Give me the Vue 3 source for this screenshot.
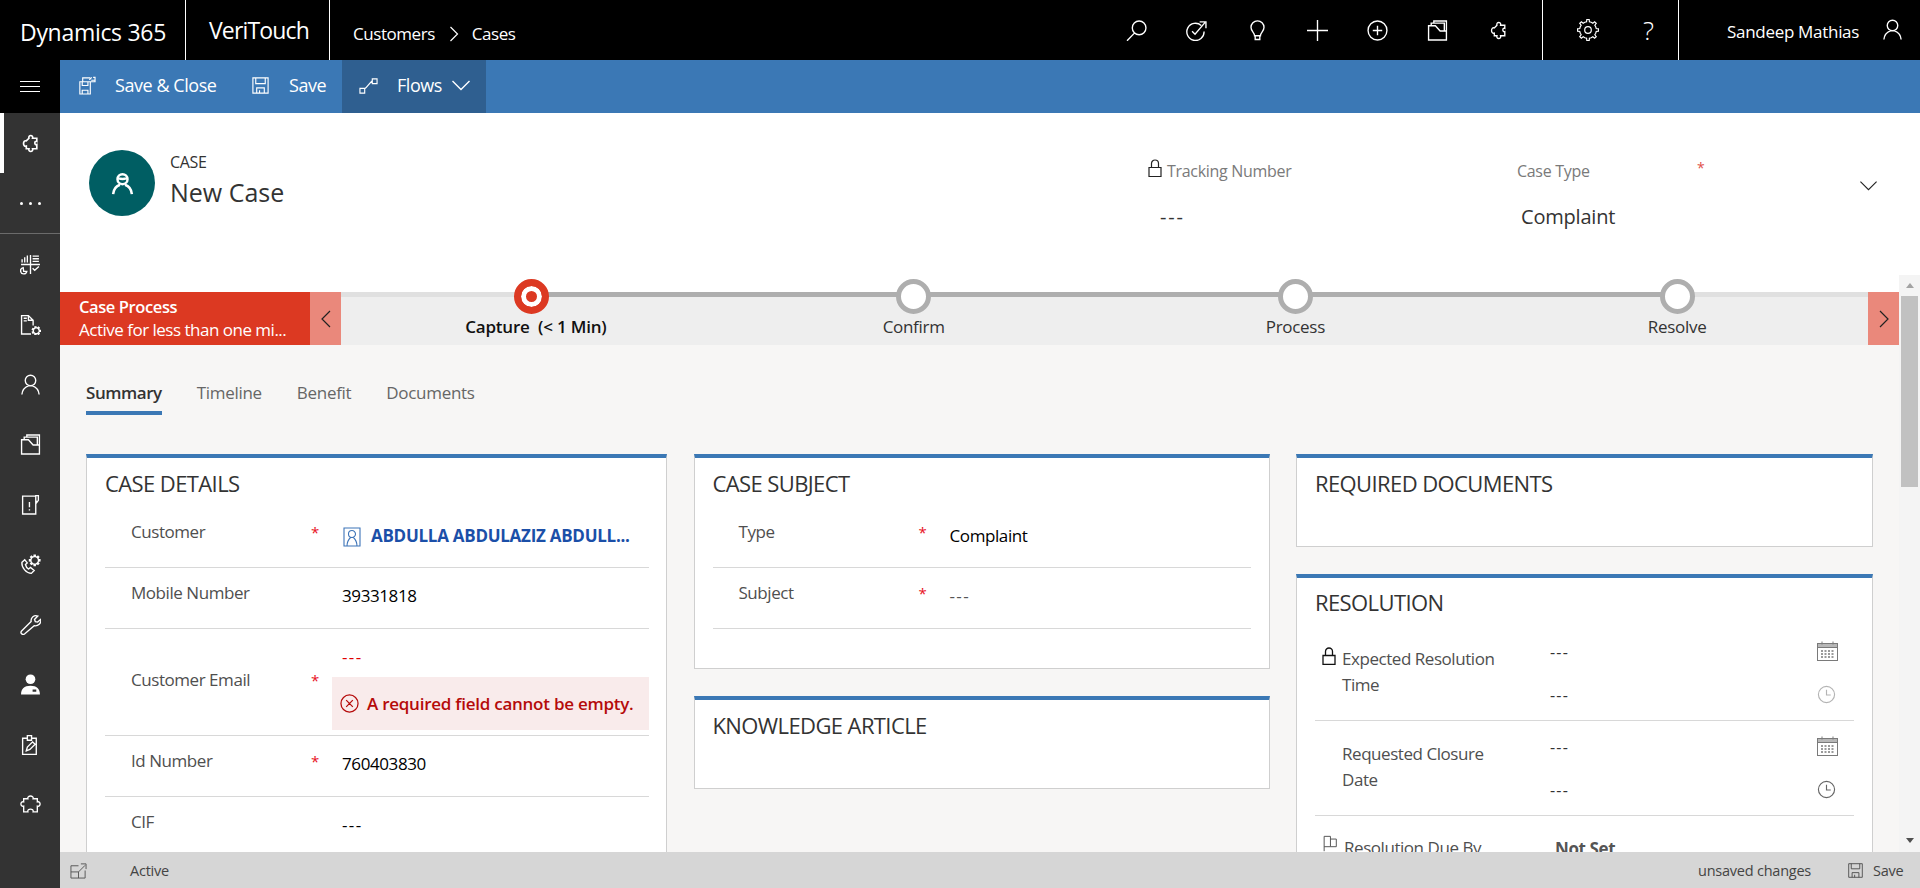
<script setup>
const gear = (cx, cy, r1, r2, n) => {
  let d = ''
  const step = (Math.PI * 2) / n
  for (let i = 0; i < n; i++) {
    const a = i * step
    const pts = [
      [r1, a - step * 0.5],
      [r1, a - step * 0.22],
      [r2, a - step * 0.14],
      [r2, a + step * 0.14],
      [r1, a + step * 0.22]
    ]
    pts.forEach(([r, t], j) => {
      const x = (cx + r * Math.cos(t)).toFixed(2)
      const y = (cy + r * Math.sin(t)).toFixed(2)
      d += (i === 0 && j === 0 ? 'M' : 'L') + x + ' ' + y + ' '
    })
  }
  return d + 'Z'
}

const icons = {
  search: 'M19 7.500a6.500 6.500 0 1 1-13 0a6.500 6.500 0 0 1 13 0ZM8 12.500L1 19.800',
  target: 'M14.5 5.2A8.2 8.2 0 1 0 17.2 11M5.8 10.8l2.8 2.8L18 2.5M13 1.8h6v6',
  bulb: 'M7.2 15c0-3-3.4-4-3.4-8a6.2 6.2 0 0 1 12.4 0c0 4-3.4 5-3.4 8ZM7.8 15v3.6h4.4V15',
  plus: 'M0 10h20M10 0v20',
  addCircle: 'M19 10a9 9 0 1 1-18 0a9 9 0 0 1 18 0ZM10 5.5v9M5.5 10h9',
  folder: 'M1.5 5.5V19h17V10.5h-6L8 5.5ZM4 5.5V3h12.500v7.500M6.500 3V1h12v9.500',
  puzzle: 'M8.5 5C7.5 1.5 13 1.5 12 5h4v3c-2.5-1-2.5 4 0 3v4h-4c1 3.5-4.5 3.5-3.5 0H6v-2.5c-3.5 1-3.5-6 0-5Z',
  puzzleWide: 'M7.5 4.5C6.500 1 13.500 1 12.500 4.500H16.500V7.500C20 6.500 20 12.500 16.500 11.500V17H12.500C13.500 13.500 6.500 13.500 7.500 17H3.500V11.500C0 12.500 0 6.500 3.500 7.500V4.500Z',
  gear: gear(10, 10, 7.6, 9.6, 8) + 'M13 10a3 3 0 1 1-6 0a3 3 0 0 1 6 0Z',
  person: 'M15 6.2a5 5 0 1 1-10 0a5 5 0 0 1 10 0ZM1.8 19.5c.4-4.6 3-7 6.2-8.2M18.2 19.5c-.4-4.6-3-7-6.2-8.2',
  save: 'M2 2h16v16H2ZM5 2v6h10V2M6 18v-5.5h8V18M9 18v-3',
  saveClose: 'M3 6h3v-4h8M3 6h11v13H3ZM5.5 19v-4h6v4M5.5 6v4h6V6M14 6h5V1.5h-2M13 4l2.5-2.5M15 4.5h4',
  flows: 'M1 13h5v5H1ZM14 3h5v5h-5ZM6 13.5c2.5-1.5 4-5 8-8.5',
  chevron: 'M1.500 6l8.500 8.500 8.500-8.500',
  chartGrid: 'M1 10h18M10 1v18M2 8V5M4.5 8V3M7 8V1.5M12 2h6M12 4.5h6M12 7h6M12 13.5l2 2 4-3.5M3 13a3 3 0 1 0 3.5 3.5H3.5Z',
  docGear: 'M12.5 11V6L8 1.5H1.5V19h9M8 1.5V6h4.5M3.5 4h3M3.5 6.5h3',
  alertDoc: 'M2.5 2H15v17H2.5ZM9 7.5v5M9 14.5v1.2M15 6V1.5h2.5V6L16 8Z',
  phone: 'M4.5 5.5L1.8 8c-.6 5 4.5 10.5 9 10.5l2.7-2.7-3.5-3-1.8 1.5C6.5 13.5 5.5 11.5 5.2 10l1.7-1.5Z',
  wrench: 'M1.5 16.2L10.6 7.2C10 3.5 13.5.5 17 2l-3.2 3.2.8 2 2.2.5L19.8 5c.8 3.8-2.7 7-6.3 6.2L4.3 19c-2 1.5-4.4-1-2.8-2.8Z',
  clip: 'M2.5 4H7V1.5h4V4h4.5v15.5h-13ZM7 4v2h4V4M6 16l1-3.5 5-5 2.4 2.2-5 5Z',
  lock: 'M1 8.5h12v9H1ZM3.5 8.5V4.5a3.5 3.5 0 0 1 7 0v4',
  flag: 'M1.5 18V1.5h7V13h-7M8.5 4.5H15V13H8.5'
}

const rail = [
  { key: 'chartGrid', thin: true },
  { key: 'docGear', gear: true },
  { key: 'person' },
  { key: 'folder' },
  { key: 'alertDoc' },
  { key: 'phone', gearTop: true },
  { key: 'wrench' },
  { key: 'solid' },
  { key: 'clip' },
  { key: 'puzzleWide' }
]
const topIcons = ['search', 'target', 'bulb', 'plus', 'addCircle', 'folder', 'puzzle']
const gearSmall = gear(15.5, 16, 2.8, 3.9, 7)
const gearTop = gear(14, 6, 3.6, 5, 8)

const stages = [
  { label: 'Capture  (< 1 Min)', active: true },
  { label: 'Confirm' },
  { label: 'Process' },
  { label: 'Resolve' }
]
const tabs = ['Summary', 'Timeline', 'Benefit', 'Documents']
const calCells = [0, 1, 2, 3, 4, 5, 6, 7, 8, 9, 10, 11]
const resolutionRows = [
  { label: 'Expected Resolution Time', lock: true, faded: true },
  { label: 'Requested Closure Date', lock: false, faded: false }
]
</script>

<template>
  <div class="app">
    <header class="topbar">
      <div class="brand">Dynamics 365</div>
      <div class="appname">VeriTouch</div>
      <nav class="crumbs">
        <span>Customers</span>
        <svg class="crumb-sep" viewBox="0 0 10 16"><path d="M1.5 1l7 7-7 7" /></svg>
        <span>Cases</span>
      </nav>
      <div class="top-icons">
        <svg v-for="k in topIcons" :key="k" class="ico top-ico" viewBox="0 0 20 20"><path :d="icons[k]" /></svg>
      </div>
      <div class="top-help">
        <svg class="ico top-gear" viewBox="0 0 20 20"><path :d="icons.gear" /></svg>
        <span class="question">?</span>
      </div>
      <div class="top-user">
        <span class="username">Sandeep Mathias</span>
        <svg class="ico top-person" viewBox="0 0 20 20"><path :d="icons.person" /></svg>
      </div>
    </header>

    <div class="below">
      <aside class="sidebar">
        <div class="burger"><i></i><i></i><i></i></div>
        <div class="rail-top">
          <div class="rail-item selected">
            <svg class="ico rail-ico strong" viewBox="0 0 20 20"><path :d="icons.puzzle" /></svg>
          </div>
          <div class="rail-item dots"><i></i><i></i><i></i></div>
        </div>
        <div v-for="item in rail" :key="item.key" class="rail-item">
          <svg v-if="item.key === 'solid'" class="rail-ico solid" viewBox="0 0 20 20">
            <circle cx="10" cy="5" r="4.6" />
            <path fill-rule="evenodd" d="M1 19.5c0-5 3-8.200 9-8.200s9 3.200 9 8.200ZM12 14.800h3.500v2H12Z" />
          </svg>
          <svg v-else class="ico rail-ico" viewBox="0 0 20 20">
            <path :d="icons[item.key]" />
            <path v-if="item.gear" :d="gearSmall" />
            <path v-if="item.gearTop" :d="gearTop" />
          </svg>
        </div>
      </aside>

      <main class="main">
        <div class="cmdbar">
          <button class="cmd first">
            <svg class="ico cmd-ico" viewBox="0 0 20 20"><path :d="icons.saveClose" /></svg>
            <span>Save &amp; Close</span>
          </button>
          <button class="cmd second">
            <svg class="ico cmd-ico" viewBox="0 0 20 20"><path :d="icons.save" /></svg>
            <span>Save</span>
          </button>
          <button class="cmd flows">
            <svg class="ico cmd-ico" viewBox="0 0 20 20"><path :d="icons.flows" /></svg>
            <span>Flows</span>
            <svg class="ico cmd-chev" viewBox="0 0 20 20"><path :d="icons.chevron" /></svg>
          </button>
        </div>

        <section class="form-head">
          <div class="avatar">
            <svg class="ico avatar-ico" viewBox="0 0 20 20">
              <path d="M14 6.500a4 4 0 1 1-8 0a4 4 0 0 1 8 0ZM6.500 5.500c2 1 5 1 7 0M2.500 18.500c.4-4 2.500-6.500 5.500-7.500M17.500 18.500c-.4-4-2.500-6.500-5.500-7.500" />
            </svg>
          </div>
          <div class="head-title">
            <div class="entity">CASE</div>
            <div class="record">New Case</div>
          </div>
          <div class="head-field tracking">
            <div class="hf-label">
              <svg class="ico lock-ico" viewBox="0 0 14 18"><path :d="icons.lock" /></svg>
              <span>Tracking Number</span>
            </div>
            <div class="hf-value dash">---</div>
          </div>
          <div class="head-field casetype">
            <div class="hf-label">
              <span class="ct-label">Case Type</span>
              <span class="ct-star">*</span>
            </div>
            <div class="hf-value">Complaint</div>
          </div>
          <svg class="ico head-chev" viewBox="0 0 20 20"><path :d="icons.chevron" /></svg>
        </section>

        <div class="body-wrap">
          <div class="scroll">
            <div class="bpf">
              <div class="bpf-flag">
                <div class="flag-title">Case Process</div>
                <div class="flag-sub">Active for less than one mi...</div>
              </div>
              <div class="bpf-nav">
                <svg viewBox="0 0 10 18"><path d="M9 1L1 9l8 8" /></svg>
              </div>
              <div class="bpf-track">
                <div v-for="(s, i) in stages" :key="s.label" class="stage" :class="{ current: s.active, last: i === stages.length - 1 }">
                  <span class="node"></span>
                  <span class="stage-label">{{ s.label }}</span>
                </div>
              </div>
              <div class="bpf-nav">
                <svg viewBox="0 0 10 18"><path d="M1 1l8 8-8 8" /></svg>
              </div>
            </div>

            <div class="tabs">
              <span v-for="(t, i) in tabs" :key="t" class="tab" :class="{ on: i === 0 }">{{ t }}</span>
            </div>

            <div class="grid">
              <div class="col">
                <div class="card details">
                  <h2>CASE DETAILS</h2>
                  <div class="row">
                    <div class="lbl">Customer</div>
                    <div class="star">*</div>
                    <div class="val link">
                      <svg class="contact-ico" viewBox="0 0 18 20"><path d="M1 1h16v18H1ZM12.500 7a3.500 3.500 0 1 1-7 0a3.500 3.500 0 0 1 7 0ZM4 19c0-4 1.500-6.500 3.500-8.500M14 19c0-4-1.500-6.500-3.500-8.500" /></svg>
                      <span>ABDULLA ABDULAZIZ ABDULL...</span>
                    </div>
                  </div>
                  <div class="row">
                    <div class="lbl">Mobile Number</div>
                    <div class="star"></div>
                    <div class="val">39331818</div>
                  </div>
                  <div class="row email">
                    <div class="lbl">Customer Email</div>
                    <div class="star">*</div>
                    <div class="email-val">
                      <div class="val-err">---</div>
                      <div class="errbox">
                        <svg class="err-ico" viewBox="0 0 20 20"><path d="M19 10a9 9 0 1 1-18 0a9 9 0 0 1 18 0ZM6.500 6.500l7 7M13.500 6.500l-7 7" /></svg>
                        <span>A required field cannot be empty.</span>
                      </div>
                    </div>
                  </div>
                  <div class="row">
                    <div class="lbl">Id Number</div>
                    <div class="star">*</div>
                    <div class="val">760403830</div>
                  </div>
                  <div class="row">
                    <div class="lbl">CIF</div>
                    <div class="star"></div>
                    <div class="val dashes">---</div>
                  </div>
                </div>
              </div>

              <div class="col">
                <div class="card subject">
                  <h2>CASE SUBJECT</h2>
                  <div class="row">
                    <div class="lbl">Type</div>
                    <div class="star">*</div>
                    <div class="val">Complaint</div>
                  </div>
                  <div class="row">
                    <div class="lbl">Subject</div>
                    <div class="star">*</div>
                    <div class="val dashes muted">---</div>
                  </div>
                </div>
                <div class="card short">
                  <h2>KNOWLEDGE ARTICLE</h2>
                </div>
              </div>

              <div class="col">
                <div class="card short">
                  <h2>REQUIRED DOCUMENTS</h2>
                </div>
                <div class="card resolution">
                  <h2>RESOLUTION</h2>
                  <div v-for="r in resolutionRows" :key="r.label" class="res-row">
                    <div class="res-slot">
                      <svg v-if="r.lock" class="ico res-lock" viewBox="0 0 14 18"><path :d="icons.lock" /></svg>
                    </div>
                    <div class="res-label">{{ r.label }}</div>
                    <div class="res-vals">
                      <div class="res-line">
                        <span>---</span>
                        <svg class="cal" viewBox="0 0 21 20">
                          <rect x="0.500" y="2.500" width="20" height="17" />
                          <rect class="cal-head" x="0.500" y="2.500" width="20" height="4" />
                          <path d="M5 0.500v3M16 0.500v3" />
                          <g class="cal-dots">
                            <rect v-for="n in calCells" :key="n" :x="4 + (n % 4) * 3.500" :y="9 + Math.floor(n / 4) * 3" width="2" height="2" />
                          </g>
                        </svg>
                      </div>
                      <div class="res-line second">
                        <span>---</span>
                        <svg class="clock" :class="{ faded: r.faded }" viewBox="0 0 20 20"><path d="M18.500 10a8.500 8.500 0 1 1-17 0a8.500 8.500 0 0 1 17 0ZM10 5v5.500h4.500" /></svg>
                      </div>
                    </div>
                  </div>
                  <div class="res-row due">
                    <div class="res-slot">
                      <svg class="ico res-flag" viewBox="0 0 16 20"><path :d="icons.flag" /></svg>
                    </div>
                    <div class="res-label due-label">Resolution Due By</div>
                    <div class="not-set">Not Set</div>
                  </div>
                </div>
              </div>
            </div>
          </div>
          <div class="scrollbar">
            <span class="arrow up"></span>
            <span class="thumb"></span>
            <span class="arrow down"></span>
          </div>
        </div>

        <footer class="status">
          <svg class="ico status-ico" viewBox="0 0 18 18"><path d="M1 4h8M1 4v13h15V9M1 10.500h8M9 10.500V17M9 10.500l7-7M11.500 2H17v5.500" /></svg>
          <span class="status-active">Active</span>
          <span class="status-unsaved">unsaved changes</span>
          <svg class="ico status-save" viewBox="0 0 20 20"><path :d="icons.save" /></svg>
          <span class="status-savetxt">Save</span>
        </footer>
      </main>
    </div>
  </div>
</template>

<style>
html, body { margin: 0; padding: 0; }
</style>

<style scoped>
.app {
  width: 1920px;
  height: 888px;
  overflow: hidden;
  display: flex;
  flex-direction: column;
  font-family: "Open Sans", "Noto Sans", sans-serif;
  color: #333;
}
.ico { fill: none; stroke: currentColor; stroke-width: 1.3; display: block; flex: none; }

.topbar {
  height: 60px;
  flex: none;
  background: #000;
  color: #fff;
  display: flex;
  align-items: stretch;
}
.brand {
  width: 186px;
  box-sizing: border-box;
  padding: 17px 0 0 20px;
  font-size: 23px;
  line-height: 30px;
  letter-spacing: -0.3px;
  border-right: 1px solid #fff;
}
.appname {
  width: 144px;
  box-sizing: border-box;
  padding: 15px 0 0 23px;
  font-size: 23px;
  line-height: 30px;
  letter-spacing: -0.85px;
  border-right: 1px solid #fff;
}
.crumbs {
  display: flex;
  align-items: center;
  padding: 7px 0 0 23px;
  font-size: 17px;
  letter-spacing: -0.45px;
  width: 780px;
  box-sizing: border-box;
}
.crumb-sep { width: 10px; height: 16px; margin: 0 13px 0 14px; fill: none; stroke: #fff; stroke-width: 1.2; }
.top-icons {
  width: 432px;
  display: flex;
  align-items: center;
  box-sizing: border-box;
  padding: 0 0 0 16px;
  gap: 39.300px;
}
.top-ico { width: 21px; height: 21px; }
.top-help {
  width: 137px;
  flex: none;
  border-left: 1px solid #fff;
  border-right: 1px solid #fff;
  display: flex;
  align-items: center;
  padding-left: 34px;
  box-sizing: border-box;
}
.top-gear { width: 22px; height: 22px; stroke-width: 1.1; }
.question { margin-left: 44px; font-size: 26px; font-weight: 300; line-height: 30px; }
.top-user { display: flex; align-items: center; padding-left: 48px; }
.username { font-size: 17px; letter-spacing: -0.3px; width: 155px; white-space: nowrap; padding-top: 3px; }
.top-person { width: 21px; height: 21px; margin-top: -2px; }

.below { flex: 1; display: flex; min-height: 0; }
.sidebar { width: 60px; flex: none; background: #333; color: #fff; }
.burger {
  height: 53px;
  background: #000;
  display: flex;
  flex-direction: column;
  justify-content: center;
  gap: 4px;
  padding-left: 20px;
}
.burger i { display: block; width: 20px; height: 1px; background: #fff; }
.rail-top { border-bottom: 1px solid #6b6b6b; height: 120px; }
.rail-item {
  height: 60px;
  display: flex;
  align-items: center;
  justify-content: center;
  box-sizing: border-box;
}
.rail-item.selected { border-left: 4px solid #fff; padding-right: 4px; }
.rail-item.dots { gap: 6px; }
.rail-item.dots i { width: 3px; height: 3px; background: #fff; border-radius: 50%; display: block; }
.rail-ico { width: 21px; height: 21px; }
.rail-ico.strong { stroke-width: 1.6; }
.rail-ico.solid { fill: #fff; }

.main { flex: 1; min-width: 0; display: flex; flex-direction: column; }
.cmdbar {
  height: 53px;
  flex: none;
  background: #3b78b5;
  display: flex;
  color: #fff;
}
.cmd {
  border: 0;
  background: none;
  color: inherit;
  font: inherit;
  font-size: 18px;
  letter-spacing: -0.45px;
  display: flex;
  align-items: center;
  padding: 0 0 3px;
}
.cmd.first { padding-left: 17px; width: 192px; box-sizing: border-box; }
.cmd.second { width: 90px; box-sizing: border-box; }
.cmd.flows { background: #2f5f90; width: 144px; padding-left: 17px; box-sizing: border-box; }
.cmd-ico { width: 19px; height: 19px; margin-right: 19px; stroke-width: 1.2; }
.cmd.second .cmd-ico { margin-left: -1px; margin-right: 19px; }
.cmd-chev { width: 20px; height: 20px; margin-left: 9px; stroke-width: 1.4; }

.form-head {
  height: 162px;
  flex: none;
  background: #fff;
  display: flex;
  position: relative;
}
.avatar {
  width: 66px;
  height: 66px;
  border-radius: 50%;
  background: #005e63;
  color: #fff;
  margin: 37px 0 0 29px;
  display: flex;
  align-items: center;
  justify-content: center;
  flex: none;
}
.avatar-ico { width: 25px; height: 25px; stroke-width: 2; }
.head-title { margin-left: 15px; width: 978px; flex: none; padding-top: 37px; }
.entity { font-size: 16px; line-height: 24px; letter-spacing: -0.3px; color: #333; }
.record { font-size: 25px; line-height: 34px; margin-top: 1px; color: #333; }
.head-field { flex: none; }
.tracking { width: 369px; padding-top: 46px; }
.casetype { width: 340px; padding-top: 46px; }
.hf-label { display: flex; align-items: flex-start; font-size: 16px; letter-spacing: -0.3px; line-height: 24px; color: #7a7a7a; }
.lock-ico { width: 14px; height: 18px; color: #222; margin-right: 5px; stroke-width: 1.2; margin-top: 0; }
.ct-label { width: 180px; }
.ct-star { color: #e0504a; font-size: 14px; line-height: 18px; }
.hf-value { font-size: 20px; line-height: 28px; margin: 20px 0 0 4px; color: #333; letter-spacing: -0.2px; }
.hf-value.dash { margin-left: 12px; letter-spacing: 1.8px; }
.head-chev { position: absolute; left: 1799px; top: 63px; width: 19px; height: 19px; color: #222; stroke-width: 1.2; }

.body-wrap { flex: 1; display: flex; min-height: 0; }
.scroll { flex: 1; min-width: 0; overflow: hidden; background: #f7f6f5; }
.bpf { margin-top: 17px; height: 53px; display: flex; box-shadow: 0 -17px 0 #fff; background: #fff; position: relative; }
.bpf-flag {
  width: 250px;
  flex: none;
  background: #dc3922;
  color: #fff;
  padding: 3px 0 0 19px;
  box-sizing: border-box;
}
.flag-title { font-size: 16.500px; font-weight: 600; line-height: 24px; letter-spacing: -0.4px; }
.flag-sub { font-size: 17px; line-height: 22px; letter-spacing: -0.5px; white-space: nowrap; margin-top: 0; }
.bpf-nav {
  width: 31px;
  flex: none;
  background: #ea887b;
  display: flex;
  align-items: center;
  justify-content: center;
}
.bpf-nav svg { width: 10px; height: 18px; fill: none; stroke: #222; stroke-width: 1.2; }
.bpf-track {
  flex: 1;
  background: linear-gradient(#aeaeae 5px, #eee 5px);
  display: flex;
  position: relative;
}
.bpf-track::before {
  content: "";
  position: absolute;
  left: 0;
  top: 0;
  width: 190px;
  height: 5px;
  background: #e0e0e0;
}
.bpf-track::after {
  content: "";
  position: absolute;
  right: 0;
  top: 0;
  width: 190px;
  height: 5px;
  background: #e0e0e0;
}
.stage {
  flex: 1;
  position: relative;
  z-index: 1;
  display: flex;
  flex-direction: column;
  align-items: center;
}
.node {
  width: 35px;
  height: 35px;
  box-sizing: border-box;
  border-radius: 50%;
  background: #fff;
  border: 5px solid #aeaeae;
  margin-top: -13px;
  flex: none;
}
.current .node {
  border: 7px solid #dc3922;
  background: #dc3922;
  box-shadow: inset 0 0 0 5px #fff;
}
.stage-label {
  font-size: 17px;
  line-height: 24px;
  letter-spacing: -0.3px;
  margin-top: 1px;
  color: #333;
  white-space: pre;
}
.current .stage-label { color: #111; font-weight: 600; letter-spacing: -0.2px; margin-left: 8px; }

.tabs {
  display: flex;
  padding: 35px 0 0 26px;
  height: 74px;
  box-sizing: border-box;
  font-size: 17px;
  letter-spacing: -0.3px;
  color: #666;
  gap: 35px;
}
.tab { height: 35px; line-height: 26px; box-sizing: border-box; }
.tab.on { color: #333; font-weight: 600; border-bottom: 4px solid #3b78b5; letter-spacing: -0.45px; }

.grid {
  display: grid;
  grid-template-columns: 581px 576px 577px;
  justify-content: space-between;
  padding: 35px 26px 0;
}
.col { display: flex; flex-direction: column; gap: 27px; }
.card {
  background: #fff;
  border: 1px solid #cfcfcf;
  border-top: 4px solid #3b78b5;
  padding: 0 18px;
  box-sizing: border-box;
}
.card.details { padding-right: 17px; }
.card h2 {
  margin: 0;
  height: 49px;
  font-size: 22px;
  font-weight: 400;
  letter-spacing: -0.6px;
  line-height: 26px;
  padding-top: 12px;
  box-sizing: border-box;
  color: #333;
}
.short { height: 93px; }
.subject { height: 215px; }
.row {
  display: flex;
  height: 61px;
  box-sizing: border-box;
  border-bottom: 1px solid #d8d8d8;
  font-size: 17px;
}
.lbl {
  margin-left: 26px;
  width: 180px;
  flex: none;
  padding-top: 12px;
  line-height: 26px;
  letter-spacing: -0.45px;
  color: #4f4f4f;
}
.star {
  width: 31px;
  flex: none;
  color: #e81123;
  font-size: 15px;
  line-height: 20px;
  padding-top: 15px;
}
.val {
  padding-top: 15px;
  line-height: 26px;
  color: #000;
  font-weight: 500;
  letter-spacing: -0.4px;
  white-space: nowrap;
}
h2 + .row .val { padding-top: 16px; }
.val.dashes { letter-spacing: 1.400px; }
.val.muted { color: #555; }
.val.link {
  color: #1b4fa8;
  font-weight: 700;
  display: flex;
  align-items: flex-start;
  margin-left: 1px;
  letter-spacing: -0.27px;
}
.contact-ico { width: 18px; height: 20px; fill: none; stroke: #3d74b8; stroke-width: 1.100; margin: 4px 10px 0 0; flex: none; }
.row.email { height: 107px; }
.email .lbl { padding-top: 38px; }
.email .star { padding-top: 41px; }
.email-val { flex: 1; margin-left: -10px; }
.val-err { color: #e00000; margin-left: 10px; line-height: 26px; padding-top: 15px; height: 48px; box-sizing: border-box; letter-spacing: 1.400px; }
.errbox {
  height: 53px;
  background: #f9ebeb;
  color: #b50a0a;
  font-weight: 600;
  letter-spacing: -0.25px;
  display: flex;
  align-items: center;
  padding-left: 8px;
  white-space: nowrap;
}
.err-ico { width: 19px; height: 19px; fill: none; stroke: #b50a0a; stroke-width: 1.300; margin-right: 8px; flex: none; }

.resolution { height: 420px; }
.resolution h2 { height: 48px; padding-top: 11px; }
.res-row { display: flex; height: 95px; box-sizing: border-box; border-bottom: 1px solid #d8d8d8; padding-left: 7px; font-size: 17px; }
.res-slot { width: 20px; flex: none; padding-top: 21px; color: #111; }
.res-lock { width: 14px; height: 18px; stroke-width: 1.3; }
.res-flag { width: 16px; height: 18px; color: #555; stroke-width: 1.1; margin-top: -2px; }
.res-label {
  width: 208px;
  flex: none;
  padding: 20px 40px 0 0;
  box-sizing: border-box;
  line-height: 26px;
  letter-spacing: -0.45px;
  color: #4f4f4f;
}
.res-vals { flex: 1; padding: 16px 16px 0 0; }
.res-line { display: flex; justify-content: space-between; align-items: flex-start; height: 43px; color: #333; font-size: 16px; line-height: 20px; letter-spacing: 1.200px; }
.cal { width: 21px; height: 20px; fill: none; stroke: #7a7a7a; stroke-width: 1; margin-top: -1px; }
.cal-head { fill: #b8b8b8; stroke: #7a7a7a; }
.cal-dots rect { fill: #9a9a9a; stroke: none; }
.clock { width: 19px; height: 19px; fill: none; stroke: #666; stroke-width: 1.200; margin: 0 2px 0 0; }
.clock.faded { stroke: #b4b4b4; }
.due { border: 0; }
.due-label { padding-top: 19px; padding-left: 2px; padding-right: 0; white-space: nowrap; }
.not-set { font-weight: 700; font-size: 17px; padding-top: 20px; line-height: 26px; margin-left: 5px; color: #555; letter-spacing: -0.4px; }

.scrollbar {
  width: 21px;
  flex: none;
  background: #f4f4f4;
  display: flex;
  flex-direction: column;
  align-items: center;
}
.arrow { width: 0; height: 0; border-left: 4px solid transparent; border-right: 4px solid transparent; flex: none; }
.arrow.up { border-bottom: 5px solid #a3a3a3; margin-top: 8px; }
.arrow.down { border-top: 5px solid #505050; margin-bottom: 9px; }
.thumb { width: 17px; height: 191px; background: #c1c1c1; margin-top: 8px; flex: none; margin-bottom: auto; }

.status {
  height: 36px;
  flex: none;
  background: #d6d6d6;
  display: flex;
  align-items: center;
  font-size: 14.500px;
  letter-spacing: -0.23px;
  color: #444;
}
.status-ico { width: 17px; height: 17px; margin-left: 10px; stroke-width: 1; color: #555; }
.status-active { margin-left: 43px; width: 1568px; flex: none; }
.status-unsaved { width: 149px; flex: none; white-space: nowrap; }
.status-save { width: 17px; height: 17px; color: #444; stroke-width: 1; }
.status-savetxt { margin-left: 9px; }
</style>
